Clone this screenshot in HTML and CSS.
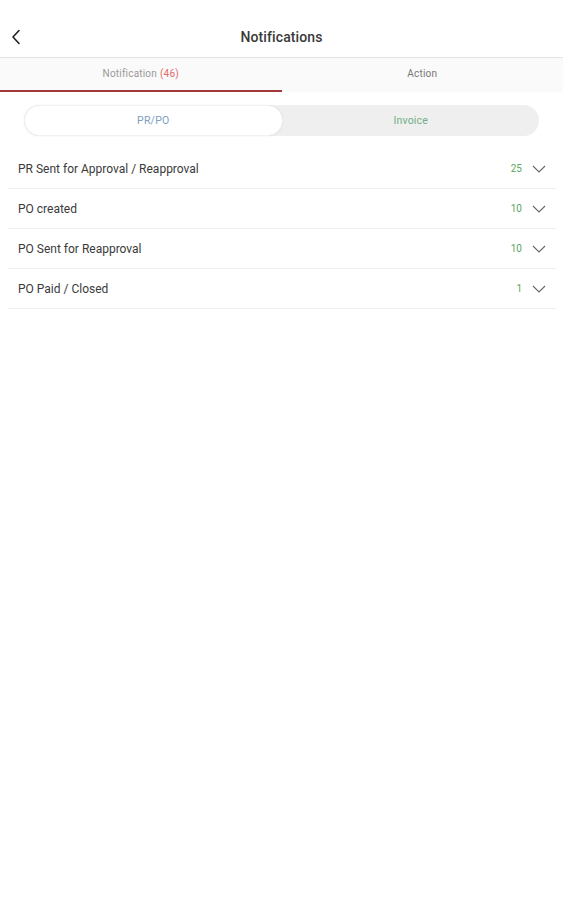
FILE: index.html
```html
<!DOCTYPE html>
<html>
<head>
<meta charset="utf-8">
<link rel="stylesheet" href="styles.css">
</head>
<body>
<div class="app">
  <header class="topbar">
    <span class="back">
      <svg width="10" height="16" viewBox="0 0 10 16"><path d="M8 1.5 L2 8 L8 14.5" fill="none" stroke="#222" stroke-width="1.6" stroke-linecap="round" stroke-linejoin="round"/></svg>
    </span>
    <h1 class="title">Notifications</h1>
  </header>
  <nav class="tabs">
    <div class="tab active">Notification <span class="badge">(46)</span></div>
    <div class="tab">Action</div>
  </nav>
  <div class="segment-wrap">
    <div class="segment">
      <div class="seg seg-on">PR/PO</div>
      <div class="seg seg-off">Invoice</div>
    </div>
  </div>
  <ul class="list">
    <li class="row"><span class="label">PR Sent for Approval / Reapproval</span><span class="count">25</span><span class="chev"><svg width="14" height="8" viewBox="0 0 14 8"><path d="M1 1 L7 7 L13 1" fill="none" stroke="#666" stroke-width="1.1"/></svg></span></li>
    <li class="row"><span class="label">PO created</span><span class="count">10</span><span class="chev"><svg width="14" height="8" viewBox="0 0 14 8"><path d="M1 1 L7 7 L13 1" fill="none" stroke="#666" stroke-width="1.1"/></svg></span></li>
    <li class="row"><span class="label">PO Sent for Reapproval</span><span class="count">10</span><span class="chev"><svg width="14" height="8" viewBox="0 0 14 8"><path d="M1 1 L7 7 L13 1" fill="none" stroke="#666" stroke-width="1.1"/></svg></span></li>
    <li class="row"><span class="label">PO Paid / Closed</span><span class="count">1</span><span class="chev"><svg width="14" height="8" viewBox="0 0 14 8"><path d="M1 1 L7 7 L13 1" fill="none" stroke="#666" stroke-width="1.1"/></svg></span></li>
  </ul>
</div>
</body>
</html>
```

FILE: styles.css
```css
* { box-sizing: border-box; }
html, body { margin: 0; padding: 0; background: #fff; }
body { font-family: Roboto, "Liberation Sans", Arial, sans-serif; color: #222; }
.app { width: 563px; min-height: 900px; background: #fff; }
.topbar {
  height: 58px;
  padding-top: 17px;
  display: flex;
  align-items: center;
  justify-content: center;
  border-bottom: 1px solid #e2e2e2;
  position: relative;
}
.back { position: absolute; left: 11px; top: 29px; display: flex; }
.title { margin: 0; font-size: 14px; font-weight: 500; color: #3a3a3a; letter-spacing: 0.1px; }
.tabs { display: flex; height: 34px; background: #fafafa; }
.tab {
  flex: 1;
  display: flex;
  align-items: center;
  justify-content: center;
  font-size: 10px;
  letter-spacing: 0.2px;
  color: #777;
  padding-bottom: 2px;
  border-bottom: 2px solid transparent;
}
.tab.active { border-bottom-color: #a3383c; color: #999; }
.badge { color: #e26a6a; margin-left: 3px; }
.segment-wrap { padding: 13px 24px 13px; }
.segment {
  display: flex;
  height: 31px;
  background: #efefef;
  border-radius: 16px;
}
.seg {
  flex: 1;
  display: flex;
  align-items: center;
  justify-content: center;
  font-size: 10.5px;
  letter-spacing: 0.2px;
  border-radius: 16px;
}
.seg-on { background: #fff; color: #7d9ebf; box-shadow: 0 0 2px rgba(0,0,0,0.08); border: 1px solid #f2f2f2; }
.seg-off { color: #6fae88; }
.list { list-style: none; margin: 0; padding: 0 7px 0 8px; }
.row {
  display: flex;
  align-items: center;
  height: 40px;
  border-bottom: 1px solid #efefef;
  padding: 0 10px 0 10px;
}
.label { flex: 1; font-size: 12px; color: #3a3a3a; }
.count { font-size: 10px; color: #5ca55c; margin-right: 10px; }
.chev { display: flex; }
```
